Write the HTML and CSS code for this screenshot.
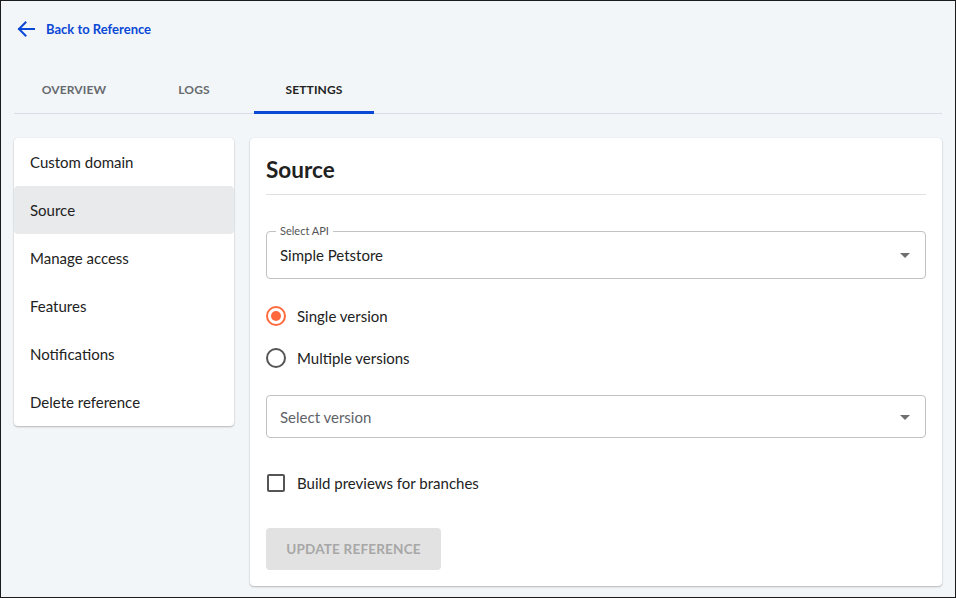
FILE: index.html
```html
<!DOCTYPE html>
<html lang="en">
<head>
<meta charset="utf-8">
<title>Reference settings</title>
<link rel="stylesheet" href="styles.css">
</head>
<body>
<div class="frame">
  <a class="back" href="#">
    <svg class="back-icon" width="18" height="16" viewBox="0 0 18 16" aria-hidden="true">
      <path d="M17 8H2M8.5 1.5L2 8l6.5 6.5" fill="none" stroke="currentColor" stroke-width="2" stroke-linecap="square"/>
    </svg>
    <span>Back to Reference</span>
  </a>

  <nav class="tabs">
    <div class="tab">OVERVIEW</div>
    <div class="tab">LOGS</div>
    <div class="tab active">SETTINGS</div>
  </nav>

  <div class="content">
    <ul class="side-menu">
      <li class="side-item">Custom domain</li>
      <li class="side-item selected">Source</li>
      <li class="side-item">Manage access</li>
      <li class="side-item">Features</li>
      <li class="side-item">Notifications</li>
      <li class="side-item">Delete reference</li>
    </ul>

    <section class="panel">
      <h1 class="panel-title">Source</h1>

      <fieldset class="select-field">
        <legend class="select-label">Select API</legend>
        <div class="select-value">Simple Petstore</div>
        <span class="caret"></span>
      </fieldset>

      <div class="radios">
        <label class="radio-row">
          <span class="radio checked"><span class="radio-dot"></span></span>
          <span>Single version</span>
        </label>
        <label class="radio-row">
          <span class="radio"></span>
          <span>Multiple versions</span>
        </label>
      </div>

      <div class="select-plain">
        <span class="placeholder">Select version</span>
        <span class="caret"></span>
      </div>

      <label class="check-row">
        <span class="checkbox"></span>
        <span>Build previews for branches</span>
      </label>

      <button class="update-btn" disabled>UPDATE REFERENCE</button>
    </section>
  </div>
</div>
</body>
</html>
```

FILE: styles.css
```css
* { box-sizing: border-box; }

html, body {
  margin: 0;
  padding: 0;
}

body {
  font-family: "Lato", "Liberation Sans", sans-serif;
  color: #212529;
}

.frame {
  width: 956px;
  height: 598px;
  border: 1px solid #1b1b1b;
  background: #f3f6f8;
  padding: 0 13px;
  overflow: hidden;
}

.back {
  display: flex;
  align-items: center;
  height: 56px;
  padding-left: 3px;
  gap: 11px;
  color: #0a48d6;
  text-decoration: none;
  font-size: 13px;
  font-weight: 700;
}

.back-icon { display: block; }

.tabs {
  display: flex;
  margin-top: 9px;
  border-bottom: 1px solid #d9dee6;
}

.tab {
  width: 120px;
  height: 48px;
  display: flex;
  align-items: center;
  justify-content: center;
  font-size: 12px;
  font-weight: 700;
  color: #666a6f;
  letter-spacing: 0.1px;
  border-bottom: 2px solid transparent;
  margin-bottom: -1px;
  padding-top: 1px;
}

.tab.active {
  color: #222;
  border-bottom: 3px solid #0a48d6;
  padding-top: 2px;
}

.content {
  display: flex;
  align-items: flex-start;
  gap: 16px;
  margin-top: 24px;
}

.side-menu {
  list-style: none;
  margin: 0;
  padding: 0;
  width: 220px;
  background: #fff;
  border-radius: 4px;
  box-shadow: 0 1px 2px rgba(0,0,0,0.25), 0 0 1px rgba(0,0,0,0.1);
}

.side-item {
  height: 48px;
  display: flex;
  align-items: center;
  padding-left: 16px;
  font-size: 15px;
  color: #222;
}

.side-item.selected {
  background: #e8eaeb;
  border-radius: 4px;
}

.panel {
  flex: 1;
  height: 448px;
  background: #fff;
  border-radius: 4px;
  box-shadow: 0 1px 2px rgba(0,0,0,0.25), 0 0 1px rgba(0,0,0,0.1);
  padding: 16px;
}

.panel-title {
  margin: 0;
  font-size: 22.5px;
  line-height: 32px;
  font-weight: 700;
  color: #212121;
  padding-bottom: 8px;
  border-bottom: 1px solid #e0e0e0;
}

.select-field {
  position: relative;
  margin: 30px 0 0;
  height: 54px;
  border: 1px solid #c2c2c2;
  border-radius: 4px;
  padding: 0 10px 0 9px;
}

.select-label {
  font-size: 11px;
  line-height: 12px;
  color: #555;
  padding: 0 4px;
}

.select-value {
  padding-left: 4px;
  font-size: 15px;
  line-height: 20px;
  margin-top: 8px;
  color: #222;
}

.caret {
  position: absolute;
  right: 15px;
  top: 50%;
  width: 0;
  height: 0;
  border-left: 5px solid transparent;
  border-right: 5px solid transparent;
  border-top: 5px solid #6f6f6f;
}

.select-field .caret { top: 16px; }

.radios {
  display: flex;
  flex-direction: column;
  gap: 22px;
  margin-top: 27px;
}

.radio-row, .check-row {
  display: flex;
  align-items: center;
  gap: 11px;
  font-size: 15px;
  color: #222;
  height: 20px;
}

.radio {
  width: 20px;
  height: 20px;
  border: 2px solid #555;
  border-radius: 50%;
  display: flex;
  align-items: center;
  justify-content: center;
}

.radio.checked { border-color: #ff6a3d; }

.radio-dot {
  width: 10px;
  height: 10px;
  border-radius: 50%;
  background: #ff6a3d;
}

.select-plain {
  position: relative;
  margin-top: 27px;
  height: 43px;
  border: 1px solid #c2c2c2;
  border-radius: 4px;
  display: flex;
  align-items: center;
  padding-left: 13px;
}

.select-plain .caret { margin-top: -2px; }

.placeholder {
  font-size: 15px;
  color: #5f6368;
}

.check-row {
  margin-top: 35px;
}

.checkbox {
  width: 18px;
  height: 18px;
  margin-left: 1px;
  margin-right: 1px;
  border: 2px solid #555;
  border-radius: 2px;
}

.update-btn {
  display: block;
  margin-top: 35px;
  width: 175px;
  height: 42px;
  border: none;
  border-radius: 4px;
  background: #e2e2e2;
  color: #a7a7a7;
  font-family: inherit;
  font-size: 13.5px;
  font-weight: 700;
  letter-spacing: 0.2px;
}
```
